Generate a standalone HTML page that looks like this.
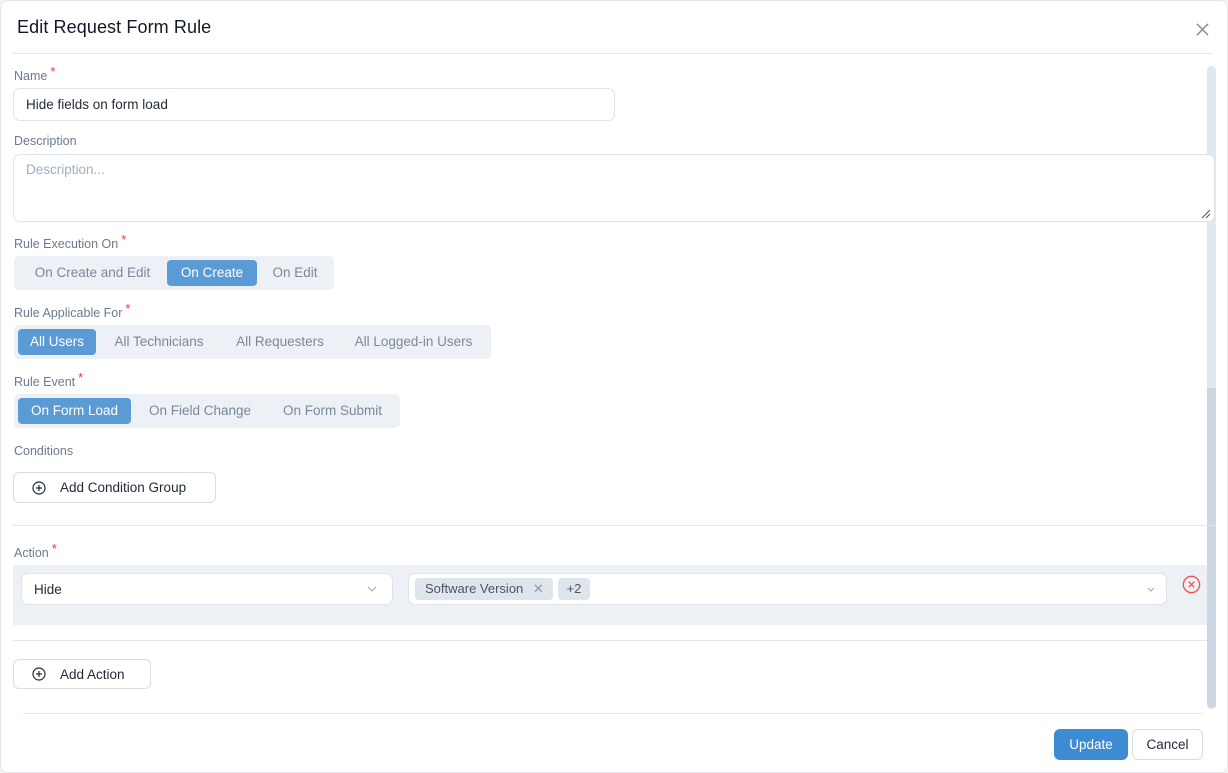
<!DOCTYPE html>
<html><head><style>
*{box-sizing:border-box;margin:0;padding:0}
body{width:1228px;height:773px;background:#f3f4f6;font-family:"Liberation Sans",sans-serif;position:relative;overflow:hidden}
.m{position:absolute;left:0;top:0;width:1228px;height:773px;background:#fff;border-radius:8px;border:1px solid #e5e7eb}
.a{position:absolute}
.lbl{position:absolute;left:14px;font-size:12.5px;color:#6b7a90}
.lbl b{color:#e53935;font-weight:normal;font-size:13px;position:relative;top:-4px;margin-left:3px}
.inp{position:absolute;border:1px solid #dde3ea;border-radius:7px;background:#fff;font-size:13.5px;color:#1f2937}
.seg{position:absolute;left:14px;background:#edf1f5;border-radius:5px;height:34px;font-size:13.5px;color:#7a889b}
.seg span{position:absolute;top:4px;height:26px;line-height:26px;border-radius:4px;white-space:nowrap;text-align:center}
.seg span.on{background:#5b9bd5;color:#fff}
.btn{position:absolute;border:1px solid #d8dee6;border-radius:6px;background:#fff;font-size:13.5px;color:#1f2937;display:flex;align-items:center}
.hr{position:absolute;height:1px;background:#e2e8f0}
</style></head><body>
<div class="m">
<div class="a" style="left:16px;top:16px;font-size:18px;color:#111827;letter-spacing:0.1px">Edit Request Form Rule</div>
<svg class="a" style="left:1195px;top:22px" width="13" height="13" viewBox="0 0 14 14"><path d="M1 1L13 13M13 1L1 13" stroke="#7d8a9c" stroke-width="1.5"/></svg>
<div class="hr" style="left:12px;top:52px;width:1199px"></div>
<div class="a" style="left:1206px;top:65px;width:9px;height:643px;background:#e2e8f0;border-radius:4px"></div>
<div class="a" style="left:1206px;top:387px;width:9px;height:320px;background:#cdd7e3;border-radius:0 0 4px 4px"></div>

<div class="lbl" style="top:67px;left:13px">Name<b>*</b></div>
<div class="inp" style="left:12px;top:87px;width:602px;height:33px;padding:8px 12px">Hide fields on form load</div>
<div class="lbl" style="top:133px;left:13px">Description</div>
<div class="inp" style="left:12px;top:153px;width:1202px;height:68px;padding:7px 12px;color:#a0aec0">Description...</div>
<svg class="a" style="left:1199px;top:207px" width="12" height="12"><path d="M2 10L10 2M6 10L10 6" stroke="#555" stroke-width="1"/></svg>

<div class="lbl" style="top:235px;left:13px">Rule Execution On<b>*</b></div>
<div class="seg" style="top:255px;left:13px;width:320px"><span style="left:4px;width:149px">On Create and Edit</span><span class="on" style="left:153px;width:90px">On Create</span><span style="left:245px;width:72px">On Edit</span></div>
<div class="lbl" style="top:304px;left:13px">Rule Applicable For<b>*</b></div>
<div class="seg" style="top:324px;left:13px;width:477px"><span class="on" style="left:4px;width:78px">All Users</span><span style="left:85px;width:120px">All Technicians</span><span style="left:208px;width:116px">All Requesters</span><span style="left:326px;width:147px">All Logged-in Users</span></div>
<div class="lbl" style="top:373px;left:13px">Rule Event<b>*</b></div>
<div class="seg" style="top:393px;left:13px;width:386px"><span class="on" style="left:4px;width:113px">On Form Load</span><span style="left:120px;width:132px">On Field Change</span><span style="left:255px;width:127px">On Form Submit</span></div>
<div class="lbl" style="top:443px;left:13px">Conditions</div>
<div class="btn" style="left:12px;top:471px;width:203px;height:31px;padding-left:18px"><svg width="14" height="14" viewBox="0 0 14 14" style="margin-right:14px"><circle cx="7" cy="7" r="6" fill="none" stroke="#1f2937" stroke-width="1.2"/><path d="M7 4v6M4 7h6" stroke="#1f2937" stroke-width="1.2"/></svg>Add Condition Group</div>

<div class="hr" style="left:12px;top:524px;width:1202px"></div>
<div class="lbl" style="top:544px;left:13px">Action<b>*</b></div>
<div class="a" style="left:12px;top:564px;width:1194px;height:60px;background:#edf1f5"></div>
<div class="inp" style="left:20px;top:572px;width:372px;height:32px;padding:8px 12px">Hide</div>
<svg class="a" style="left:366px;top:585px" width="10" height="6"><path d="M1 1l4 4 4-4" stroke="#9aa5b4" fill="none"/></svg>
<div class="inp" style="left:407px;top:572px;width:759px;height:32px"></div>
<div class="a" style="left:414px;top:577px;width:138px;height:22px;background:#dfe5ec;border-radius:4px;font-size:13px;color:#4b5563;line-height:22px;padding-left:10px">Software Version <span style="color:#8a96a6;margin-left:6px">✕</span></div>
<div class="a" style="left:557px;top:577px;width:32px;height:22px;background:#dfe5ec;border-radius:4px;font-size:13px;color:#4b5563;line-height:22px;text-align:center">+2</div>
<svg class="a" style="left:1146px;top:586px" width="8" height="5"><path d="M1 1l3 3 3-3" stroke="#9aa5b4" fill="none"/></svg>
<svg class="a" style="left:1181px;top:574px" width="19" height="19" viewBox="0 0 17 17"><circle cx="8.5" cy="8.5" r="7.3" fill="none" stroke="#ef5350" stroke-width="1.2"/><path d="M6 6l5 5M11 6l-5 5" stroke="#ef5350" stroke-width="1.2"/></svg>
<div class="hr" style="left:12px;top:639px;width:1194px"></div>
<div class="btn" style="left:12px;top:658px;width:138px;height:30px;padding-left:18px"><svg width="14" height="14" viewBox="0 0 14 14" style="margin-right:14px"><circle cx="7" cy="7" r="6" fill="none" stroke="#1f2937" stroke-width="1.2"/><path d="M7 4v6M4 7h6" stroke="#1f2937" stroke-width="1.2"/></svg>Add Action</div>
<div class="hr" style="left:22px;top:712px;width:1180px"></div>
<div class="a" style="left:1053px;top:728px;width:74px;height:31px;background:#3d8bd3;border-radius:6px;color:#fff;font-size:13.5px;line-height:31px;text-align:center">Update</div>
<div class="btn" style="left:1131px;top:728px;width:71px;height:31px;justify-content:center;font-size:13.5px">Cancel</div>
</div>
</body></html>
